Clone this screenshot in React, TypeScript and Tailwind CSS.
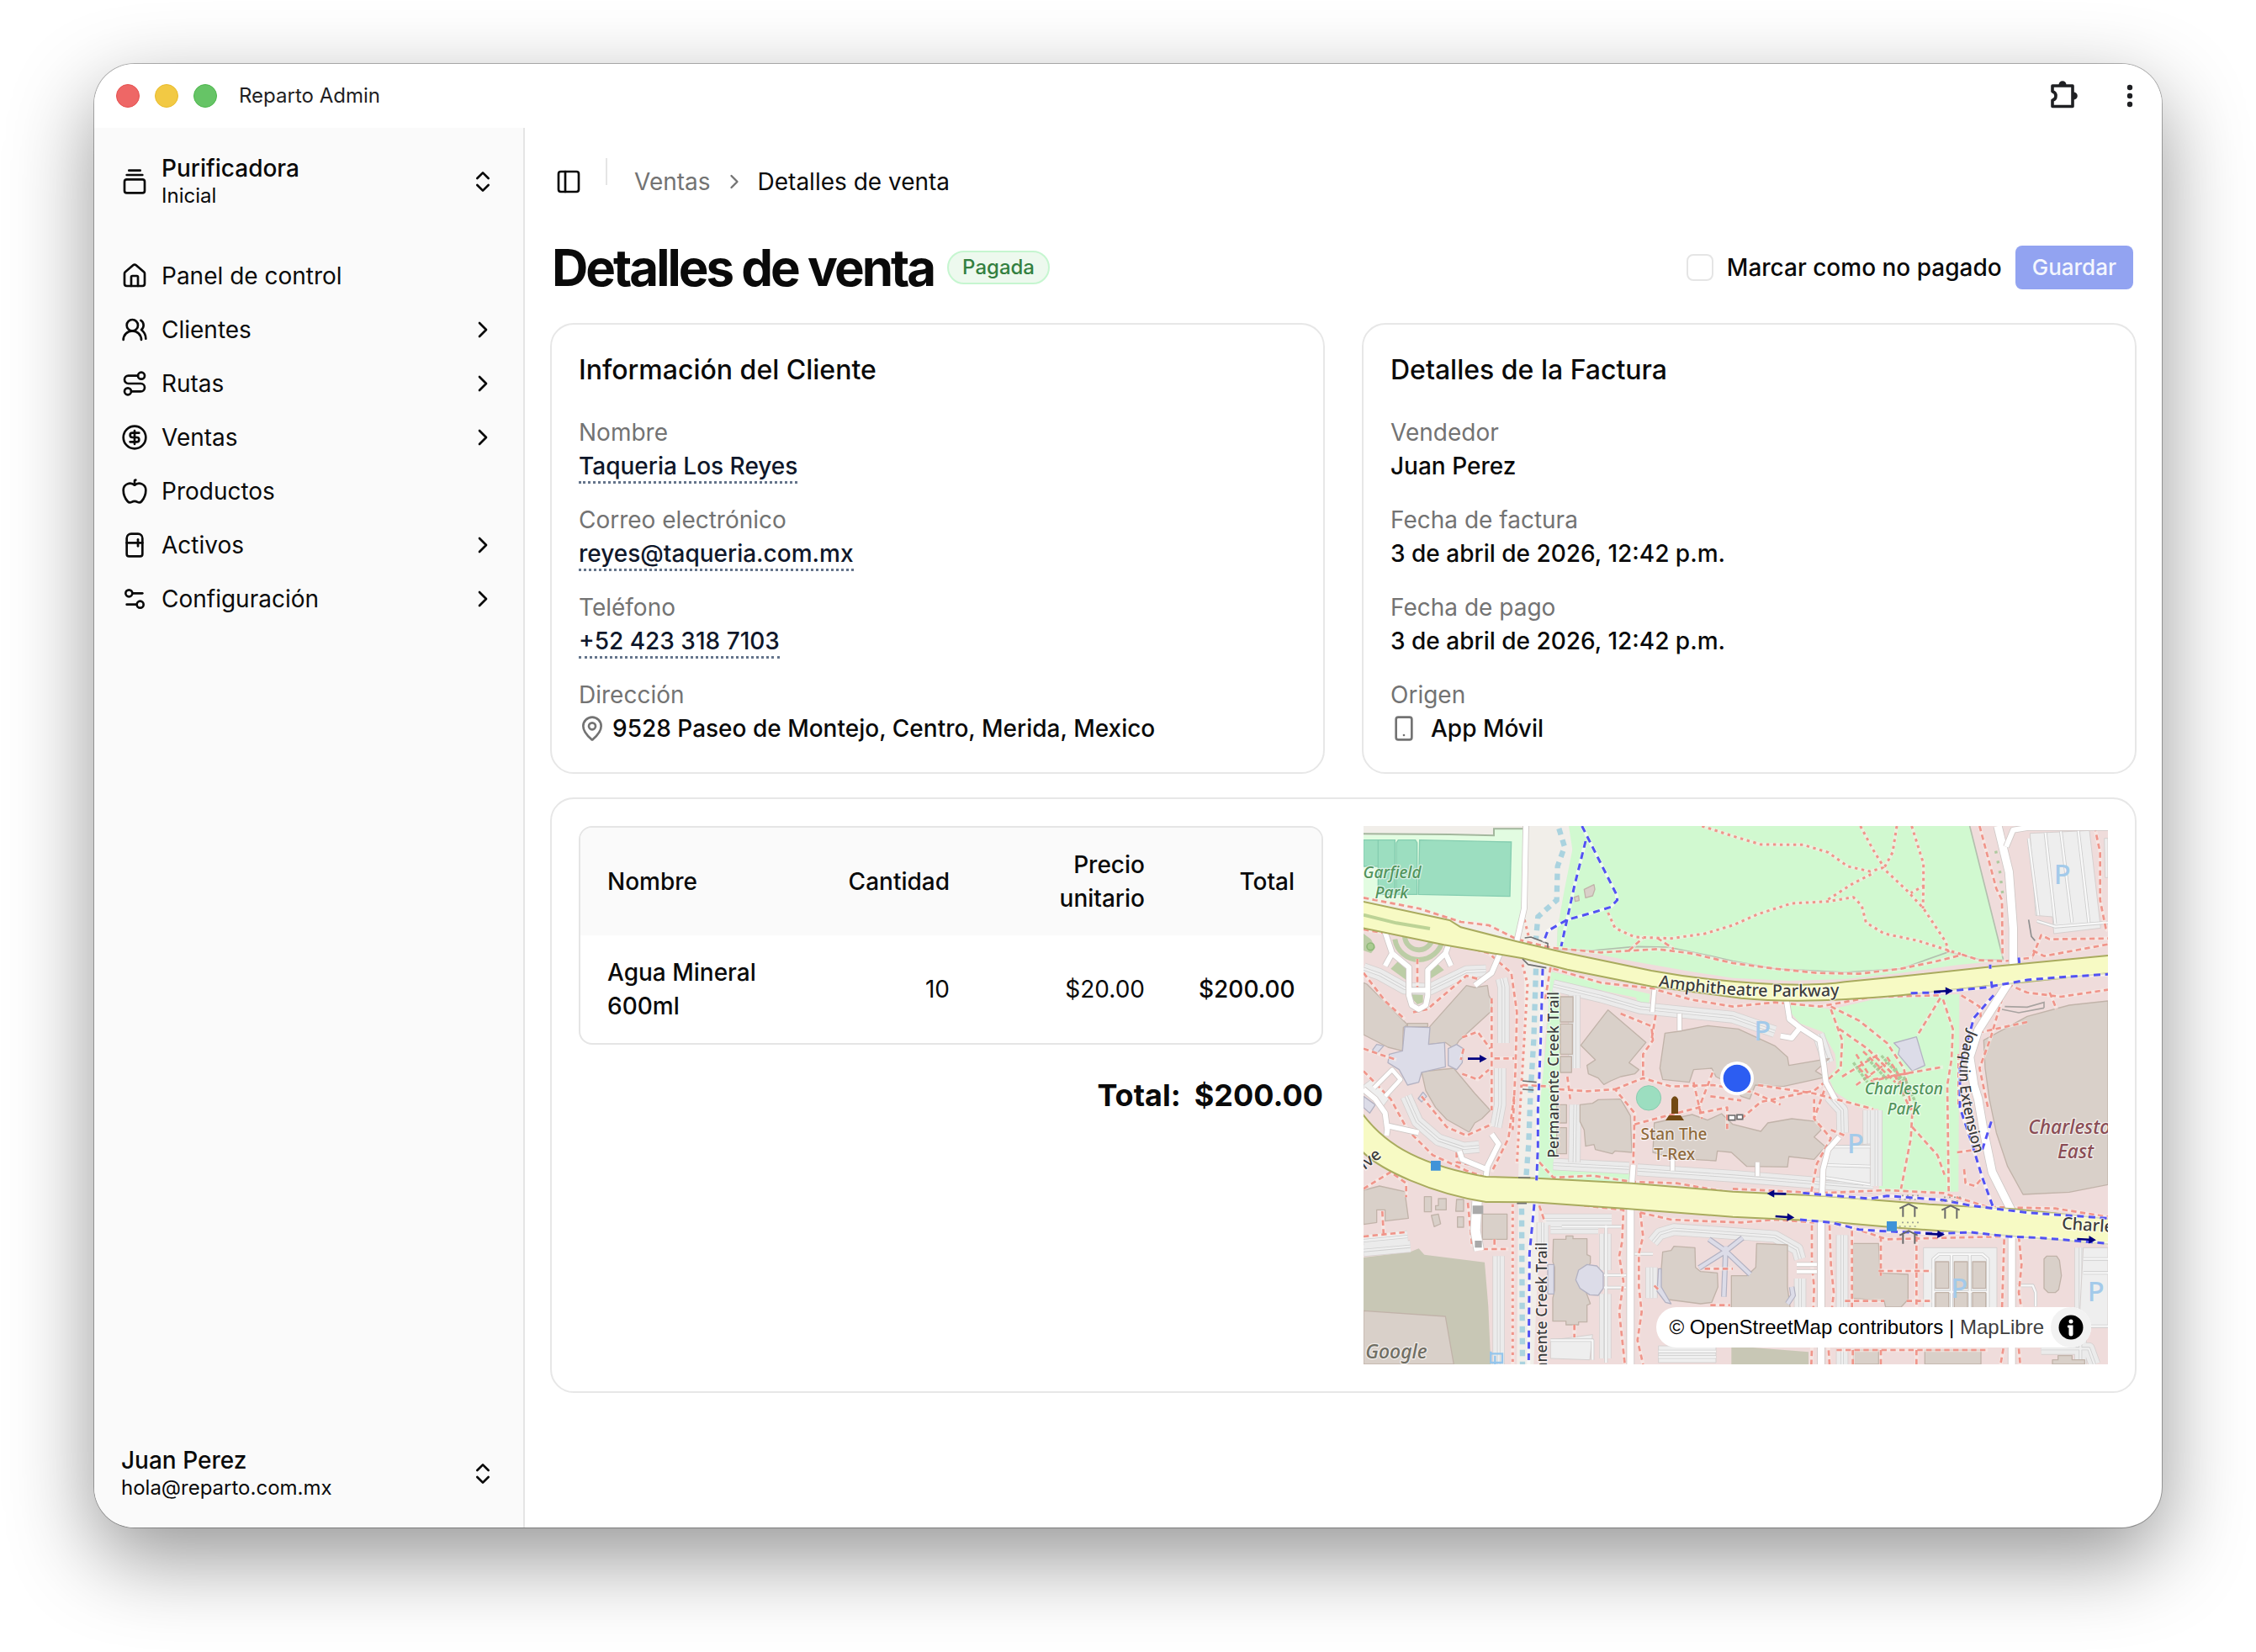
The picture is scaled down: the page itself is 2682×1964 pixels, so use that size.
import {
  Apple,
  ChevronRight,
  ChevronsUpDown,
  CircleDollarSign,
  GalleryVerticalEnd,
  House,
  MapPin,
  PanelLeft,
  Refrigerator,
  Route,
  Settings2,
  Smartphone,
  UsersRound,
} from "lucide-react";
import type { ReactNode } from "react";

const NAV_ITEMS = [
  { label: "Panel de control", icon: House, nested: false },
  { label: "Clientes", icon: UsersRound, nested: true },
  { label: "Rutas", icon: Route, nested: true },
  { label: "Ventas", icon: CircleDollarSign, nested: true },
  { label: "Productos", icon: Apple, nested: false },
  { label: "Activos", icon: Refrigerator, nested: true },
  { label: "Configuración", icon: Settings2, nested: true },
];

const TitleBar = () => (
  <header className="flex h-19 shrink-0 items-center bg-white pr-4 pl-[26px]">
    <div className="flex gap-[18px]">
      <span className="size-7 rounded-full border border-[#e5504f] bg-[#ee6766]" />
      <span className="size-7 rounded-full border border-[#e8bb2c] bg-[#f2c944]" />
      <span className="size-7 rounded-full border border-[#4db64d] bg-[#66c466]" />
    </div>
    <span className="ml-[26px] text-2xl text-[#1f1f23]">Reparto Admin</span>
    <div className="ml-auto flex items-center gap-10 text-[#1f2023]">
      <button type="button" aria-label="Extensiones">
        <svg viewBox="0 0 34 34" className="size-[34px] overflow-visible" fill="none">
          <path
            d="M4 5h24v24.500H4v-7.200a5.500 5.500 0 0 0 0-10.600Z"
            stroke="currentColor"
            strokeWidth="3.600"
            strokeLinejoin="round"
          />
          <path d="M11.500 4a4.500 4.800 0 0 1 9 0ZM29 12.500a4.800 4.500 0 0 1 0 9Z" fill="currentColor" />
        </svg>
      </button>
      <button type="button" aria-label="Menú">
        <svg viewBox="0 0 44 34" className="h-[34px] w-11" fill="currentColor">
          <circle cx="22" cy="7" r="3.200" />
          <circle cx="22" cy="17" r="3.200" />
          <circle cx="22" cy="27" r="3.200" />
        </svg>
      </button>
    </div>
  </header>
);

const Sidebar = () => (
  <aside className="flex w-[512px] shrink-0 flex-col border-r-2 border-[#e5e5e5] bg-[#fafafa]">
    <div className="p-4">
      <button type="button" className="flex h-24 w-full items-center gap-4 px-4 text-left">
        <GalleryVerticalEnd className="size-8" />
        <span className="flex flex-1 flex-col">
          <span className="text-[28px] leading-[34px] font-medium">Purificadora</span>
          <span className="text-2xl leading-8">Inicial</span>
        </span>
        <ChevronsUpDown className="size-8" />
      </button>
    </div>
    <nav className="p-4">
      {NAV_ITEMS.map(({ label, icon: Icon, nested }) => (
        <a key={label} href="#" className="flex h-16 items-center gap-4 px-4 text-[28px]">
          <Icon className="size-8" />
          <span className="flex-1">{label}</span>
          {nested && <ChevronRight className="size-8" />}
        </a>
      ))}
    </nav>
    <div className="mt-auto p-4">
      <button type="button" className="flex h-24 w-full items-center gap-4 px-4 text-left">
        <span className="flex flex-1 flex-col">
          <span className="text-[28px] leading-[34px] font-medium">Juan Perez</span>
          <span className="text-2xl leading-8">hola@reparto.com.mx</span>
        </span>
        <ChevronsUpDown className="size-8" />
      </button>
    </div>
  </aside>
);

const Card = ({ children }: { children: ReactNode }) => (
  <section className="rounded-[28px] border-2 border-[#e7e7e7] bg-white p-8">{children}</section>
);

const Field = ({ label, children }: { label: string; children: ReactNode }) => (
  <div>
    <dt className="text-[#737373]">{label}</dt>
    <dd className="flex h-10 items-center font-medium">{children}</dd>
  </div>
);

const FieldLink = ({ href, children }: { href: string; children: ReactNode }) => (
  <a href={href} className="h-[41px] border-b-[3px] border-dotted border-[#64748b] text-[#0f172a]">
    {children}
  </a>
);

const ItemsTable = () => (
  <div className="overflow-hidden rounded-2xl border-2 border-[#e5e5e5]">
    <table className="w-full table-fixed">
      <thead className="bg-[#fafafa]">
        <tr>
          <th className="px-8 py-6 text-left font-medium">Nombre</th>
          <th className="w-[196px] px-8 py-6 text-right font-medium">Cantidad</th>
          <th className="w-[232px] px-8 py-6 text-right font-medium">Precio unitario</th>
          <th className="w-[178px] px-8 py-6 text-right font-medium">Total</th>
        </tr>
      </thead>
      <tbody>
        <tr>
          <td className="px-8 py-6 font-medium">Agua Mineral 600ml</td>
          <td className="px-8 py-6 text-right">10</td>
          <td className="px-8 py-6 text-right">$20.00</td>
          <td className="px-8 py-6 text-right font-medium">$200.00</td>
        </tr>
      </tbody>
    </table>
  </div>
);

const LANDUSE = [
  { fill: "#f1eee9", d: "M33 36H780L778 130 725 400 722 470 690 500 560 450 380 400 33 310Z" },
  { fill: "#e2fce1", d: "M33 68 340 66 498 72V46H605L600 340 580 435 520 405 440 376 380 378 230 330 33 300Z" },
  { fill: "#d1f9d0", d: "M765 36 778 120 750 260 725 400 722 478 850 490 1000 520 1200 555 1350 578 1550 588 1750 582 1950 560 2150 532 2317 515 2195 36Z" },
  { fill: "#f1eee9", d: "M605 500H690L705 560 680 800 670 1050 655 1300H585L590 1100 610 800ZM585 1370H655L660 1500 640 1956H580Z" },
  { fill: "#d1f9d0", d: "M700 555 1055 635 1050 678 1010 668 1005 648 710 588 735 640 735 910 722 1000 722 1262 985 1272V1310L655 1292 660 1050 685 800Z" },
  { fill: "#d1f9d0", d: "M1555 665 1700 690 1850 655 2158 635 2155 1340 1872 1342 1870 1045 1800 1040 1715 985 1690 930 1720 900 1715 850 1670 770 1590 740 1555 700Z" },
  { fill: "#c8c7b5", d: "M33 1575 200 1555 230 1543 250 1565 465 1592 478 1750 487 1956H33ZM1345 1890 1620 1912V1956H1345Z" },
  { fill: "#bccda6", d: "M33 420 60 440 75 470 60 490 33 480ZM130 545 155 520 200 560 185 585ZM265 540 300 530 320 550 265 585ZM205 610H245V665L225 672 205 650Z" },
];

const PITCHES = [
  "M33 86H145V280H85V180H33ZM85 86V180",
  "M157 86H218L224 96V280H150V96Z",
  "M233 86 560 93 555 287 229 280Z",
];

// Wide strips of surface parking, each drawn as a thick stroke with lane lines on top
const PARKING_STRIPS = [
  "M33 545 90 565 180 615 270 618 400 555 470 552",
  "M525 580 532 610V810",
  "M520 900V1030L505 1110",
  "M185 1000 225 1090 300 1155 390 1185 445 1180",
  "M710 605 880 645 1020 685 1350 718 1500 770",
  "M1655 780 1690 880",
  "M1695 1000 1740 1050 1742 1130",
  "M710 1242 980 1256",
  "M1010 1262 1350 1285 1850 1325",
  "M785 640V900M788 1030 785 1235",
  "M672 1450V1550M675 1440H918M700 1470H870",
  "M895 1490V1620M895 1705V1935M1060 1610V1720",
  "M1065 1520 1090 1490 1140 1475 1360 1490 1500 1500 1580 1545 1590 1580",
  "M1740 1495V1760M1590 1650V1790M1835 1050V1320M1862 1050V1320",
  "M33 1550 200 1535M33 1515 190 1500M515 1570V1956",
  "M2590 1540V1956M2450 1900H2620L2640 1956M1740 1900V1956",
];

const PARKING_LOTS = [
  "M2410 62 2622 52 2662 400 2495 420 2490 360 2430 355Z",
  "M2675 80H2688V220H2678Z",
  "M1690 1180 1840 1170V1310L1675 1300Z",
  "M2030 1540H2292V1760H2030Z",
  "M2600 1540H2688V1820H2585Z",
  "M700 1870 850 1850 840 1940 700 1935Z",
  "M1085 1890H1290V1950H1085Z",
  "M60 940 130 1000 100 1040 33 990V960Z",
];

const PARKING_LINES = [
  "M2405 80 2440 355M2465 60 2500 385M2520 55 2560 380M2582 52 2620 380M2435 375 2500 395 2688 380",
  "M1690 1180H1840M1680 1245 1840 1250M1675 1290 1840 1315",
  "M2065 1760V1580L2085 1563H2240L2260 1580V1760M2130 1563V1760M2195 1563V1760M2065 1698H2260",
  "M2600 1580H2688M2600 1630H2688M2590 1820H2688",
  "M700 1870H850V1940M740 1465H960M898 1460V1950M890 1638H970M890 1682H970M1000 1562H1065",
  "M1085 1910H1290M1085 1930H1290M2365 1675H2420L2430 1700V1750",
];

const BUILDINGS = [
  "M33 595 45 600 190 745 175 755 172 838 120 825 33 780Z",
  "M275 745 400 605 430 612 475 605 480 640 493 665 485 700 375 800 355 830 325 808 265 815 262 760Z",
  "M190 740H262V752H190Z",
  "M240 912 355 900 430 990 485 1050 455 1080 430 1095 410 1128 330 1083 290 1040 255 980Z",
  "M905 692 1040 808 980 880 1015 905 1000 920 950 930 915 945 890 958 870 935 835 920 830 890 860 870 808 818Z",
  "M1108 775 1160 768 1260 748 1370 760 1500 820 1545 860 1550 890 1695 865 1645 910 1680 932 1530 965 1430 960 1410 1010 1380 1000 1350 960 1290 930 1275 900 1210 905 1195 950 1100 940 1090 900Z",
  "M805 1030 850 1025 870 1012 950 1010 985 1070 990 1200 930 1195 920 1205 860 1190 855 1172 825 1178 820 1120 805 1090Z",
  "M1070 1095 1205 1065 1260 1085 1310 1062 1350 1100 1450 1125 1475 1095 1560 1080 1650 1090 1665 1120 1640 1145 1680 1180 1640 1225 1550 1215 1545 1252 1400 1250 1345 1200 1295 1195 1290 1230 1150 1222 1065 1200Z",
  "M735 645H780V735H735ZM735 742H778V850H735ZM735 858H775V915H735ZM722 1030H757V1095H722ZM722 1112H757V1205H722Z",
  "M2688 660 2550 675 2400 715 2245 800 2250 900 2265 1010 2290 1130 2330 1250 2385 1350 2550 1342 2688 1315Z",
  "M33 1335 90 1320 180 1340 193 1435 110 1445V1405H80V1450L33 1457Z",
  "M250 1358H275V1412H250ZM300 1365H328V1405H290V1390H300ZM365 1368H390V1410H362ZM275 1425 300 1420 308 1455 285 1465ZM368 1430H390V1467H368Z",
  "M457 1420H545V1510H457Z",
  "M33 1765 325 1785 355 1956H33Z",
  "M710 1510H755V1498H780V1508H830V1565L842 1570V1595L820 1630V1680L842 1740 830 1745V1805H800V1815H755V1802H708V1720L715 1690V1610L708 1590Z",
  "M1100 1555 1130 1550 1140 1535 1215 1540 1217 1610 1235 1625 1295 1630 1297 1680 1275 1735 1235 1740 1120 1725 1090 1680Z",
  "M1435 1525 1545 1530V1680L1555 1760H1345V1640H1400L1432 1610Z",
  "M1780 1525H1870L1875 1630 1975 1635V1725L1950 1752H1895L1890 1730 1780 1720Z",
  "M2073 1590H2120V1685H2073ZM2140 1590H2187V1685H2140ZM2205 1590H2252V1685H2205ZM2073 1700H2120V1760H2073ZM2140 1700H2187V1760H2140ZM2205 1700H2252V1760H2205Z",
  "M2460 1580 2470 1570H2505L2515 1585 2522 1640 2512 1690 2500 1700H2475L2460 1685Z",
  "M1780 1905H1870V1956H1780ZM2035 1905H2235V1956H2035ZM2490 1940H2510V1925H2560V1940H2605V1956H2490Z",
  "M820 262 855 245 858 262 850 285 825 292ZM785 290 800 285 802 302 788 305Z",
];

const GLASS_BUILDINGS = [
  "M180 752 270 755 265 815 322 808 325 895 240 915 230 950 190 960 160 905 120 880 125 850 172 838Z",
  "M335 830 365 815 388 830 385 880 365 905 335 890Z",
  "M1925 810 2005 788 2035 890 1990 910 1940 850 1945 830Z",
  "M790 1655 800 1620 830 1600 865 1605 888 1630V1685L870 1710 840 1708 805 1685Z",
  "M690 1600H712V1705H690ZM1085 1615H1095V1680L1130 1740 1110 1735 1080 1695Z",
  "M65 835 80 815 105 820 80 848ZM228 1008 245 985 258 1000 240 1020ZM33 1000 75 1030 55 1060 33 1040Z",
];

const MINOR_ROADS = [
  { w: 18, d: "M612 36 606 330 580 445" },
  { w: 18, d: "M110 415 135 490 195 540V640L205 675 230 690 255 675 262 640V550L325 490 340 450M135 490 110 535M325 490 345 535M195 622H262" },
  { w: 18, d: "M520 490 490 560 430 605" },
  { w: 18, d: "M33 975 75 1010 110 1060 118 1120 115 1140M118 1105 230 1130M490 1135 515 1170 475 1250 470 1285M375 1195 385 1225 470 1260" },
  { w: 14, d: "M70 970 135 905 165 940 110 1000" },
  { w: 14, d: "M1070 620 1063 700M1160 705V765M1135 1225V1265M1438 1235V1285" },
  { w: 18, d: "M1542 660 1552 725 1590 755 1660 800 1675 890 1682 950 1715 1010M1590 755 1560 792 1520 785" },
  { w: 18, d: "M1730 1145 1690 1190 1672 1260 1668 1360M995 1245 990 1310" },
  { w: 28, d: "M2295 36 2335 200 2350 400V540L2330 600 2225 765 2195 860 2210 960 2225 1010 2242 1110 2275 1270 2345 1410" },
  { w: 18, d: "M2325 110 2350 50 2400 42 2688 42" },
  { w: 24, d: "M2345 1480V1956M985 1395V1956M1665 1440V1956" },
  { w: 12, d: "M1578 1600H1650M1578 1625H1650" },
  { w: 34, d: "M438 1375 432 1480 445 1550" },
];

const FOOTPATHS = [
  "M33 292 230 330 380 378 480 390 580 440 700 470 880 487 1080 475 1200 490 1350 525 1500 545 1650 560 1800 563 1950 545 2070 520 2170 495 2230 515 2320 518 2420 505",
  "M33 405 120 420M370 460 480 490 560 560 580 700 575 900 565 1120",
  "M33 560 110 660 180 725M225 510V620M490 650V1050M210 700 260 690 400 570 470 590",
  "M385 790 440 770 485 830M385 920 440 940 480 905M500 865H570M390 830 380 870",
  "M33 830 60 840 150 870M33 910 130 1010 190 1120 280 1210 400 1265 470 1290",
  "M700 540 680 660M710 545 880 595 1060 615 1200 655 1350 680 1500 665 1660 680 1850 645 2090 640",
  "M980 480 1030 435M1080 435 1140 475",
  "M2230 36 2290 260 2310 300 2312 500M2640 36 2660 130 2660 300 2680 400 2688 410M2420 500 2450 425 2480 440 2688 437M2420 480 2460 500 2688 458",
  "M950 705 1060 750 1065 800 1030 850V930M1075 710 1060 800M930 975 1030 935 1130 965 1280 960 1420 985 1520 1030M730 975 830 982 930 975 1000 1060 995 1240",
  "M1000 1100 1130 1065 1230 1040 1280 910M1210 950 1240 1080M1270 1000 1380 1015M1230 1060 1330 1040 1330 1120M1380 1080 1450 1020 1640 980 1690 940M1440 960 1640 990 1850 1045",
  "M1700 690 1740 800 1735 900 1690 940 1640 1080M1700 680 1800 730 1900 810 1960 900 1990 1060 1985 1150 1950 1330",
  "M2090 650 2010 780M2100 655 2135 760 2130 870 2115 960 2120 1340M1730 760 1830 830 1930 930 1985 1050M1740 930 1870 850M1790 960 1900 880M1850 940 2100 895M1990 1110 2080 1210 2105 1280",
  "M2165 640 2230 680 2240 760 2210 830M2400 735 2240 770M2330 600 2400 630 2520 645 2688 620M2480 630 2505 690M2320 620 2270 790 2230 900 2260 1040",
  "M2155 850 2155 1040M2175 1260 2180 1310 2215 1320 2240 1290M2150 1200 2220 1190",
  "M660 1235 710 1290 850 1283 990 1305 1150 1310 1350 1345M1350 1330 1660 1345 1900 1335 2100 1345 2260 1395 2500 1400 2688 1430",
  "M1630 1340 1650 1240 1700 1150 1640 1080 1640 1010M1700 1120 1750 1140",
  "M660 1390 680 1450M820 1390 960 1405 955 1520 945 1570 960 1660 945 1770 965 1956M1020 1415 1030 1500 1015 1560 1015 1680 1025 1770 1010 1870 1030 1956",
  "M1020 1415 1130 1440 1240 1445 1380 1450 1500 1440 1640 1450M1632 1460V1600L1640 1680 1630 1956M1695 1460 1700 1600 1710 1700 1690 1880 1695 1956",
  "M1750 1460 1900 1510 2100 1505 2320 1500M1775 1480V1760M1878 1500V1640M2005 1500V1760M1870 1623H2060M1750 1730H1890M1970 1730H2060M1720 1905H2260M1778 1905V1956M1878 1905V1956M2005 1905V1956",
  "M2318 1510 2310 1760M2370 1500 2380 1600 2370 1700 2380 1760M2370 1900 2375 1956M2315 1900 2305 1956",
  "M405 1380 420 1530 450 1545 550 1545M500 1510V1545M33 1500 180 1485M100 1410 105 1500M33 1330 130 1270 185 1310V1360",
  "M570 1000 550 1150 490 1270M240 1000 330 1110 400 1140 490 1100M1250 1615H1350M1270 1745H1340M785 1815V1860M1070 1675 1085 1690",
  "M760 930 770 1010M600 960 700 965M365 1200V1235L440 1250",
];

// Unpaved trails get a finer dot than the paved footpaths
const TRAILS = [
  "M905 345 930 400 1000 432 1130 437 1250 420 1350 390 1440 350 1560 312 1690 305 1780 290 1810 320 1825 380 1890 420 2010 445 2120 480 2170 495",
  "M1240 36 1350 72 1450 102 1600 103 1690 130 1760 180 1840 198 1885 185 1970 265 2030 330 2110 450 2120 490",
  "M1805 36 1850 120 1890 185M1935 36 1920 130 1890 185M1988 36 2030 170 2030 250 1985 275M1690 298 1780 240 1850 205M2030 250 2028 330",
  "M600 530 618 600 600 900 580 1240M565 1385V1956M607 370 622 430",
];

const BIKE_PATHS = [
  "M812 36 935 280 938 300 915 325 850 345 760 370 690 410 675 450",
  "M825 90 785 250 738 465",
  "M672 545 665 800 655 1050 655 1180 650 1300",
  "M642 1385 625 1560 622 1956",
  "M1985 632 2070 630 2250 612 2400 585 2520 575 2688 565",
  "M2370 505 2372 525M2268 530V545M2272 590 2275 615M2280 640 2210 720 2185 810 2160 900 2160 1040 2200 1160 2240 1290 2280 1400",
  "M1600 1345 1840 1365 1900 1355 2100 1370 2200 1390 2400 1415 2688 1435",
  "M1590 1440 1700 1450 1800 1475 1870 1480 2080 1490 2200 1485 2330 1500 2450 1505 2688 1525",
  "M2272 1090 2240 1190",
];

const ARROWS = [
  { x: 405, y: 866, r: 0 },
  { x: 2067, y: 627, r: -3 },
  { x: 1540, y: 1348, r: 181 },
  { x: 1502, y: 1428, r: 4 },
  { x: 2038, y: 1490, r: 3 },
  { x: 2578, y: 1509, r: 3 },
];

const PARKING_SIGNS = [
  { x: 2525, y: 244 },
  { x: 1456, y: 802 },
  { x: 1788, y: 1204 },
  { x: 2158, y: 1720 },
  { x: 2645, y: 1732 },
];

const SHELTERS = [
  { x: 1977, y: 1372 },
  { x: 2127, y: 1378 },
  { x: 1977, y: 1468 },
];

const StreetMap = () => (
  <svg
    viewBox="33 36 2655 1920"
    preserveAspectRatio="xMidYMid slice"
    className="absolute inset-0 size-full font-['Noto_Sans',sans-serif]"
    role="img"
    aria-label="Mapa"
    fill="none"
  >
    <defs>
      <path id="amphitheatre" d="M1085 608 Q1390 660 1800 638" />
      <path id="joaquin" d="M2190 762 Q2152 850 2160 960 Q2174 1090 2232 1270" />
    </defs>
    <rect x="33" y="36" width="2655" height="1920" fill="#efdcdb" />
    {LANDUSE.map(({ fill, d }) => (
      <path key={d} d={d} fill={fill} />
    ))}
    <path d="M33 64 340 66 498 70V46H605" stroke="#a3b79d" strokeWidth="6" />
    <path d="M725 476 850 480 1000 466 1120 468 1250 495 1350 518 1500 545 1750 558 1950 545 2120 485 2230 512 2315 514 2195 36" stroke="#b3bfae" strokeWidth="5" />
    {PITCHES.map((d) => (
      <path key={d} d={d} fill="#9cdec0" stroke="#85cdb0" strokeWidth="4" />
    ))}
    <path d="M180 430A48 48 0 0 0 280 425M145 440A86 86 0 0 0 315 440" stroke="#bccda6" strokeWidth="18" />
    <circle cx="58" cy="466" r="13" stroke="#8fb878" strokeWidth="5" fill="#a9cc90" />
    <circle cx="1050" cy="1006" r="44" fill="#9cdec0" stroke="#8bcbb0" strokeWidth="3" />

    <g strokeLinejoin="round">
      {PARKING_STRIPS.map((d) => (
        <g key={d}>
          <path d={d} stroke="#d6d0cf" strokeWidth="44" />
          <path d={d} stroke="#ebebeb" strokeWidth="39" />
          <path d={d} stroke="#cfcfcf" strokeWidth="12" />
          <path d={d} stroke="#efefef" strokeWidth="7" />
        </g>
      ))}
      {PARKING_LOTS.map((d) => (
        <path key={d} d={d} fill="#eeeeee" stroke="#d6d0cf" strokeWidth="3" />
      ))}
      {PARKING_LINES.map((d) => (
        <g key={d}>
          <path d={d} stroke="#cdcdcd" strokeWidth="12" />
          <path d={d} stroke="#f8f8f8" strokeWidth="7" />
        </g>
      ))}
      {BUILDINGS.map((d) => (
        <path key={d} d={d} fill="#d9d0c9" stroke="#c1b3a9" strokeWidth="4" />
      ))}
      {GLASS_BUILDINGS.map((d) => (
        <path key={d} d={d} fill="#dcdce8" stroke="#b3b2c2" strokeWidth="4" />
      ))}
      <path d="M1230 1612 1325 1552 1412 1635M1265 1510 1325 1552 1385 1505M1325 1535 1318 1715M1545 1740 1565 1710 1560 1680" stroke="#b3b2c2" strokeWidth="20" />
      <path d="M1230 1612 1325 1552 1412 1635M1265 1510 1325 1552 1385 1505M1325 1535 1318 1715M1545 1740 1565 1710 1560 1680" stroke="#dcdce8" strokeWidth="13" />
    </g>

    <g stroke="#fbeeea" strokeWidth="13" strokeOpacity="0.55" strokeLinejoin="round">
      {[...FOOTPATHS, ...TRAILS].map((d) => (
        <path key={d} d={d} />
      ))}
    </g>
    <g stroke="#f0958a" strokeWidth="8" strokeDasharray="19 13" strokeLinejoin="round">
      {FOOTPATHS.map((d) => (
        <path key={d} d={d} />
      ))}
    </g>
    <g stroke="#f0958a" strokeWidth="9" strokeDasharray="10 14" strokeLinejoin="round">
      {TRAILS.map((d) => (
        <path key={d} d={d} />
      ))}
    </g>
    <path
      d="M730 45 750 110 725 180 722 300 655 360 648 440M648 545 640 800 628 1000 622 1170 612 1300M597 1400 600 1956"
      stroke="#aad3df"
      strokeWidth="19"
      strokeDasharray="23 19"
    />

    {MINOR_ROADS.map(({ w, d }) => (
      <g key={d} strokeLinejoin="round">
        <path d={d} stroke="#cfc8c6" strokeWidth={w + 5} />
        <path d={d} stroke="#ffffff" strokeWidth={w} />
      </g>
    ))}
    <path d="M422 1390H460V1420H422ZM430 1515H455V1540H430Z" fill="#a9a9a9" />
    <path d="M2310 690 2370 702 2460 685M2320 680 2400 682 2460 665V685" stroke="#a8a3a0" strokeWidth="5" />
    <path d="M2405 370 2415 430 2428 445" stroke="#8f8f8f" strokeWidth="5" />

    <g fill="#f7fac4" stroke="#a9ab5e" strokeWidth="6" strokeLinejoin="round">
      <path d="M20 303 340 372 380 397 580 448 740 485 1060 552Q1240 585 1440 597T1750 592L1950 572 2250 540 2700 497V560L2270 605 1950 640Q1600 672 1380 650L1060 608 760 548 600 508 320 460 20 398Z" />
      <path d="M20 1050Q90 1150 200 1205T470 1287L650 1292 990 1310 1350 1340 1670 1355 2050 1385 2350 1402 2700 1438V1528L2300 1495 1950 1470 1670 1445 1350 1430 960 1400 640 1378 470 1377Q330 1355 200 1300T20 1188Z" />
    </g>
    <path d="M33 353 150 382 270 402" stroke="#bcd396" strokeWidth="12" />
    <path d="M608 435 630 432 690 455V470M600 510 620 530 685 542M600 945 650 950M600 975 640 978M585 1290H628M580 1382H615" stroke="#6f6f6f" strokeWidth="5" />

    <g stroke="#ffffff" strokeOpacity="0.6" strokeWidth="12">
      {BIKE_PATHS.map((d) => (
        <path key={d} d={d} />
      ))}
    </g>
    <g stroke="#5252f3" strokeWidth="9" strokeDasharray="24 17">
      {BIKE_PATHS.map((d) => (
        <path key={d} d={d} />
      ))}
    </g>
    <g stroke="#9cc48e" strokeWidth="10" strokeOpacity="0.8">
      <path d="M1780 880 1830 950M1830 865 1900 940M1880 855 1960 945M1930 900 1960 1000M1960 930 2010 1040" strokeDasharray="12 4" />
      <path d="M2288 125 2296 165 2302 195 2306 228 2315 300" strokeDasharray="9 27" />
    </g>
    <g stroke="#f0958a" strokeWidth="8" strokeDasharray="19 11">
      <path d="M1790 850 1840 930M1815 840 1930 950M1860 860 1960 960M1900 860 1940 920M1800 900 1860 960M1870 940 1990 915" />
    </g>

    {ARROWS.map(({ x, y, r }) => (
      <g key={`${x}-${y}`} transform={`translate(${x} ${y}) rotate(${r})`} fill="#000080">
        <path d="M0-4H42V-14L68 0 42 14V4H0Z" />
      </g>
    ))}
    {SHELTERS.map(({ x, y }) => (
      <g key={`${x}-${y}`} stroke="#6a6a6a" strokeWidth="6">
        <path d={`M${x - 32} ${y + 28}l32-16 32 16M${x - 20} ${y + 24}v34M${x + 22} ${y + 24}v34`} />
        <path d={`M${x - 34} ${y - 4}h70M${x - 24} ${y - 18}h64`} strokeWidth="5" strokeDasharray="6 12" stroke="#a0a59a" />
      </g>
    ))}
    <path d="M273 1230H308V1265H273ZM1899 1446H1935V1481H1899Z" fill="#4093d8" />
    <path d="M1131 1010Q1143 990 1155 1010V1062H1131ZM1122 1068H1164L1176 1086H1110Z" fill="#734a14" />
    <path d="M1335 1068H1358V1085H1335ZM1365 1066H1385V1082H1365Z" fill="#ffffff" stroke="#6a6a6a" strokeWidth="5" />
    <path d="M487 1918H528V1950H487V1910M502 1925V1956" stroke="#94c5ec" strokeWidth="7" />

    <g fill="#a3caea" fontSize="98" fontWeight="500" textAnchor="middle">
      {PARKING_SIGNS.map(({ x, y }) => (
        <text key={`${x}-${y}`} x={x} y={y}>
          P
        </text>
      ))}
    </g>

    <g stroke="#ffffff" strokeOpacity="0.6" strokeWidth="8" strokeLinejoin="round" paintOrder="stroke" fontSize="57" fontWeight="500">
      <g fill="#52945c" fontStyle="italic" textAnchor="middle">
        <text x="135" y="222">Garfield</text>
        <text x="133" y="294">Park</text>
        <text x="1960" y="993">Charleston</text>
        <text x="1960" y="1064">Park</text>
      </g>
      <g fill="#8f6a3c" textAnchor="middle">
        <text x="1140" y="1156">Stan The</text>
        <text x="1142" y="1228">T-Rex</text>
      </g>
      <g fill="#8a4d55" fontStyle="italic" fontSize="68">
        <text x="2404" y="1134">Charleston</text>
        <text x="2508" y="1222">East</text>
      </g>
      <text x="40" y="1936" fill="#6f6e63" fontStyle="italic" fontSize="69">Google</text>
      <g fill="#3c3c3c">
        <text fontSize="59">
          <textPath href="#amphitheatre">Amphitheatre Parkway</textPath>
        </text>
        <text fontSize="53">
          <textPath href="#joaquin">Joaquin Extension</textPath>
        </text>
        <text transform="translate(728 1220) rotate(-90)" fontSize="53">Permanente Creek Trail</text>
        <text transform="translate(687 2114) rotate(-90)" fontSize="53">Permanente Creek Trail</text>
        <text transform="translate(2522 1473) rotate(4)" fontSize="60">Charleston</text>
        <text transform="translate(100 1215) rotate(-38)" fontSize="58" textAnchor="end">Drive</text>
      </g>
    </g>

    <circle cx="1365" cy="936" r="60" fill="#ffffff" />
    <circle cx="1365" cy="936" r="49" fill="#2c5df2" />
  </svg>
);

const MapPanel = () => (
  <div className="relative h-[640px] overflow-hidden">
    <StreetMap />
    <div className="absolute right-5 bottom-5 flex h-12 items-center gap-2 rounded-full bg-white pl-4 font-['Liberation_Sans',sans-serif] text-2xl text-black">
      <p>
        <a href="#">© OpenStreetMap contributors</a> | <a href="#" className="text-[#404040]">MapLibre</a>
      </p>
      <button type="button" aria-label="Atribución" className="flex size-12 items-center justify-center rounded-full bg-[#f2f2f2]">
        <svg viewBox="0 0 30 30" className="size-[30px]">
          <circle cx="15" cy="15" r="14.500" fill="#000" />
          <circle cx="15" cy="8" r="2.500" fill="#fff" />
          <path d="M12 12.500h5.500V23a2.500 2.500 0 0 1-5 0v-7.500a1.500 1.500 0 0 1-.5-3Z" fill="#fff" />
        </svg>
      </button>
    </div>
  </div>
);

export default function App() {
  return (
    <div className="flex min-h-screen bg-white px-28 pt-19 pb-37 font-['Inter',sans-serif] text-[28px] leading-10 text-[#0a0a0a]">
      <div className="flex flex-1 flex-col overflow-hidden rounded-[48px] bg-white shadow-[0_0_0_1px_rgba(0,0,0,0.28),0_36px_100px_rgba(0,0,0,0.42)]">
        <TitleBar />
        <div className="flex flex-1">
          <Sidebar />
          <main className="flex min-w-0 flex-1 flex-col px-[30px]">
            <div className="flex h-32 items-center">
              <div className="flex h-14 items-start gap-4">
                <button type="button" aria-label="Alternar barra lateral" className="-ml-1.5 flex size-14 items-center justify-center">
                  <PanelLeft className="size-8" />
                </button>
                <span className="h-8 w-0.5 bg-[#e5e5e5]" />
              </div>
              <nav aria-label="Ruta de navegación" className="ml-8 flex items-center gap-3.5">
                <a href="#" className="text-[#737373]">Ventas</a>
                <ChevronRight className="size-7 text-[#737373]" />
                <span>Detalles de venta</span>
              </nav>
            </div>

            <div className="mb-7 flex h-19 items-center gap-4 pr-1 pl-0.5">
              <h1 className="text-6xl font-bold tracking-tighter">Detalles de venta</h1>
              <span className="flex h-10 items-center rounded-full border-2 border-[#c6f6d0] bg-[#edf9ee] px-4 text-2xl font-medium text-[#338040]">
                Pagada
              </span>
              <div className="ml-auto flex items-center gap-4">
                <input
                  id="unpaid"
                  type="checkbox"
                  className="size-8 appearance-none rounded-lg border-2 border-[#e5e5e5] bg-white"
                />
                <label htmlFor="unpaid" className="font-medium">Marcar como no pagado</label>
                <button type="button" className="h-13 rounded-lg bg-[#92a3f1] px-5 text-[26px] font-medium text-[#f4f6fe]">
                  Guardar
                </button>
              </div>
            </div>

            <div className="grid grid-cols-2 gap-11">
              <Card>
                <h2 className="mb-8 text-[32px] leading-11 font-medium">Información del Cliente</h2>
                <dl className="flex flex-col gap-6">
                  <Field label="Nombre">
                    <FieldLink href="#">Taqueria Los Reyes</FieldLink>
                  </Field>
                  <Field label="Correo electrónico">
                    <FieldLink href="mailto:reyes@taqueria.com.mx">reyes@taqueria.com.mx</FieldLink>
                  </Field>
                  <Field label="Teléfono">
                    <FieldLink href="tel:+524233187103">+52 423 318 7103</FieldLink>
                  </Field>
                  <Field label="Dirección">
                    <MapPin className="mr-2 size-8 text-[#737373]" />
                    9528 Paseo de Montejo, Centro, Merida, Mexico
                  </Field>
                </dl>
              </Card>
              <Card>
                <h2 className="mb-8 text-[32px] leading-11 font-medium">Detalles de la Factura</h2>
                <dl className="flex flex-col gap-6">
                  <Field label="Vendedor">Juan Perez</Field>
                  <Field label="Fecha de factura">3 de abril de 2026, 12:42 p.m.</Field>
                  <Field label="Fecha de pago">3 de abril de 2026, 12:42 p.m.</Field>
                  <Field label="Origen">
                    <Smartphone className="mr-4 size-8 text-[#737373]" />
                    App Móvil
                  </Field>
                </dl>
              </Card>
            </div>

            <div className="mt-7">
              <Card>
                <div className="grid grid-cols-2 gap-12">
                  <div>
                    <ItemsTable />
                    <p className="mt-8 flex justify-end gap-4 text-4xl leading-14 font-bold">
                      <span>Total:</span>
                      <span>$200.00</span>
                    </p>
                  </div>
                  <MapPanel />
                </div>
              </Card>
            </div>
          </main>
        </div>
      </div>
    </div>
  );
}
